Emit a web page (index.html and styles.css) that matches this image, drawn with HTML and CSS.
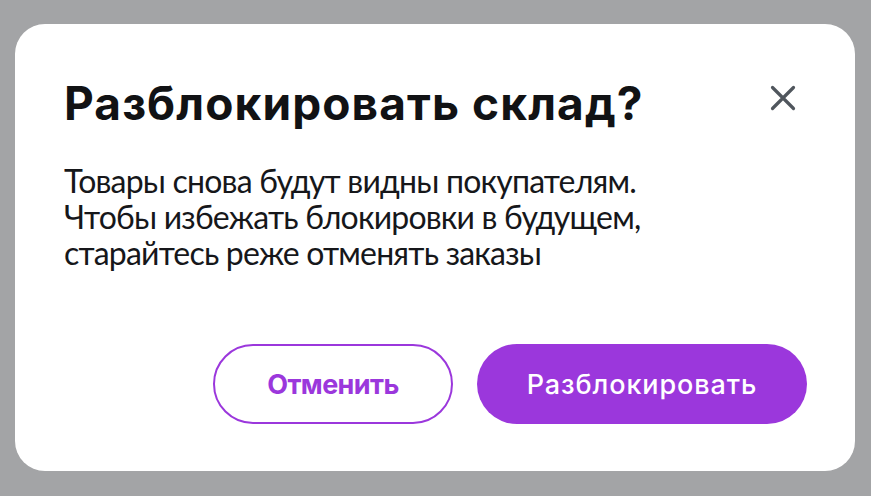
FILE: index.html
```html
<!DOCTYPE html>
<html lang="ru">
<head>
<meta charset="utf-8">
<link rel="stylesheet" href="styles.css">
</head>
<body>
<div class="overlay">
  <div class="modal">
    <div class="head">
      <h1 class="title">Разблокировать склад?</h1>
      <button class="close" aria-label="Закрыть">
        <svg width="26" height="26" viewBox="0 0 26 26"><path d="M2.5 2.5 L23.5 23.5 M23.5 2.5 L2.5 23.5" stroke="#50565d" stroke-width="3.2" stroke-linecap="round"/></svg>
      </button>
    </div>
    <p class="text">Товары снова будут видны покупателям.<br>Чтобы избежать блокировки в будущем,<br>старайтесь реже отменять заказы</p>
    <div class="actions">
      <button class="btn btn-outline">Отменить</button>
      <button class="btn btn-primary">Разблокировать</button>
    </div>
  </div>
</div>
</body>
</html>
```
FILE: styles.css
```css
* { box-sizing: border-box; }
html, body { margin: 0; height: 100%; }
body {
  background: #a3a4a6;
  font-family: Inter, "Noto Sans", sans-serif;
}
.overlay {
  padding: 24px 16px 25px 15px;
}
.modal {
  background: #fff;
  border-radius: 30px;
  height: 447px;
  padding: 0 48px 47px 49px;
  display: flex;
  flex-direction: column;
}
.head {
  display: flex;
  justify-content: space-between;
  align-items: flex-start;
  padding-top: 54px;
}
.title {
  margin: 0;
  font-size: 46px;
  line-height: 50px;
  font-weight: 700;
  color: #111214;
  letter-spacing: 1.1px;
  white-space: nowrap;
}
.close {
  border: 0;
  background: none;
  padding: 0;
  margin: 7px 11px 0 0;
  width: 26px;
  height: 26px;
  cursor: pointer;
}
.close svg { display: block; }
.text {
  margin: 35px 0 0;
  font-family: Lato, "Noto Sans", sans-serif;
  font-size: 32px;
  line-height: 36px;
  color: #16171a;
  letter-spacing: -0.8px;
  white-space: nowrap;
}
.actions {
  margin-top: auto;
  display: flex;
  justify-content: flex-end;
  gap: 24px;
}
.btn {
  height: 80px;
  border-radius: 40px;
  font-family: Inter, "Noto Sans", sans-serif;
  font-size: 27px;
  cursor: pointer;
  padding: 0;
}
.btn-outline {
  width: 240px;
  background: #fff;
  border: 2px solid #9b37dc;
  color: #9b37dc;
  font-weight: 700;
  letter-spacing: -0.6px;
}
.btn-primary {
  width: 330px;
  background: #9b37dc;
  border: 0;
  color: #fff;
  font-weight: 500;
  letter-spacing: 0.9px;
}
```
